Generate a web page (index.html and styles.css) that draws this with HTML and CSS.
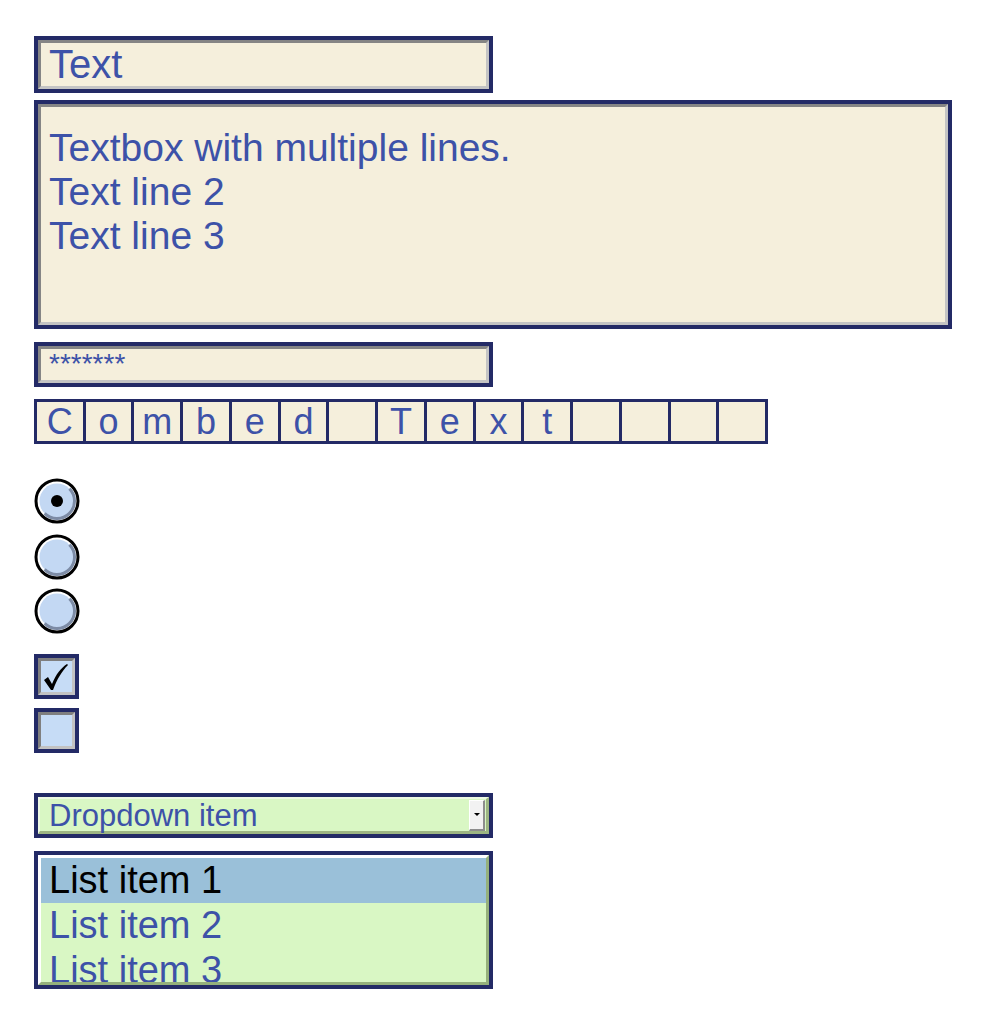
FILE: index.html
```html
<!DOCTYPE html>
<html>
<head>
<meta charset="utf-8">
<link rel="stylesheet" href="styles.css">
</head>
<body>
<div class="page">
  <div class="field single"><div class="inner">Text</div></div>
  <div class="field multi"><div class="inner">Textbox with multiple lines.<br>Text line 2<br>Text line 3</div></div>
  <div class="field pass"><div class="inner">*******</div></div>
  <div class="comb">
    <span>C</span><span>o</span><span>m</span><span>b</span><span>e</span><span>d</span><span></span><span>T</span><span>e</span><span>x</span><span>t</span><span></span><span></span><span></span><span></span>
  </div>
  <div class="radios">
    <svg class="radio" width="46" height="46" viewBox="0 0 46 46"><circle cx="23" cy="23" r="21" fill="#fff" stroke="#000" stroke-width="3"/><circle cx="23" cy="23" r="17.5" fill="#c3d8f3"/><path d="M35.4 10.6 A17.5 17.5 0 0 1 10.6 35.4" fill="none" stroke="#7d8ca6" stroke-width="3"/><circle cx="23" cy="23" r="6" fill="#000"/></svg>
    <svg class="radio" width="46" height="46" viewBox="0 0 46 46"><circle cx="23" cy="23" r="21" fill="#fff" stroke="#000" stroke-width="3"/><circle cx="23" cy="23" r="17.5" fill="#c3d8f3"/><path d="M35.4 10.6 A17.5 17.5 0 0 1 10.6 35.4" fill="none" stroke="#7d8ca6" stroke-width="3"/></svg>
    <svg class="radio" width="46" height="46" viewBox="0 0 46 46"><circle cx="23" cy="23" r="21" fill="#fff" stroke="#000" stroke-width="3"/><circle cx="23" cy="23" r="17.5" fill="#c3d8f3"/><path d="M35.4 10.6 A17.5 17.5 0 0 1 10.6 35.4" fill="none" stroke="#7d8ca6" stroke-width="3"/></svg>
  </div>
  <div class="checks">
    <div class="check"><div class="cinner"><svg class="tick" width="31" height="31" viewBox="0 0 31 31"><path d="M3 19 L7 16 L11 23 C15 13 20 7 26 3 L27 4 C21 10 16 18 12 29 L10 29 Z" fill="#000"/></svg></div></div>
    <div class="check"><div class="cinner"></div></div>
  </div>
  <div class="dropdown">
    <div class="dinner">
      <span class="dtext">Dropdown item</span>
      <span class="dbtn"><span class="tri"></span></span>
    </div>
  </div>
  <div class="list">
    <div class="linner">
      <div class="item sel">List item 1</div>
      <div class="item">List item 2</div>
      <div class="item">List item 3</div>
    </div>
  </div>
</div>
</body>
</html>
```

FILE: styles.css
```css
html, body { margin: 0; padding: 0; background: #fff; }
body { font-family: "Liberation Sans", Arial, sans-serif; color: #3d52a8; }
.page { padding: 36px 0 0 34px; display: flex; flex-direction: column; align-items: flex-start; }

.field { border: 4px solid #232a66; box-sizing: border-box; width: 459px; background: #f5efdc; }
.field .inner {
  border-style: solid; border-width: 3px;
  border-color: #858585 #c4c4c4 #c4c4c4 #858585;
  box-sizing: border-box; height: 100%;
  padding-left: 8px; white-space: nowrap; overflow: hidden;
}
.single { height: 57px; }
.single .inner { font-size: 40px; line-height: 42px; padding-top: 0; }
.multi { width: 918px; height: 229px; margin-top: 7px; }
.multi .inner { font-size: 39px; line-height: 44px; padding-top: 19px; }
.pass { height: 45px; margin-top: 13px; }
.pass .inner { font-size: 28px; line-height: 24px; padding-top: 3px; }

.comb {
  margin-top: 12px; display: flex; background: #232a66; padding: 3px;
  gap: 3px; width: 734px; height: 45px; box-sizing: border-box;
}
.comb span {
  flex: 1; background: #f5efdc; font-size: 36px; line-height: 39px;
  text-align: center; display: block;
}

.radios { margin-top: 34px; display: flex; flex-direction: column; }
.radio { display: block; }
.radio + .radio { margin-top: 10px; }
.radios .radio:nth-child(3) { margin-top: 8px; }

.checks { margin-top: 20px; display: flex; flex-direction: column; gap: 9px; }
.check { width: 45px; height: 45px; border: 4px solid #232a66; box-sizing: border-box; }
.cinner {
  height: 100%; box-sizing: border-box; background: #c6dcf6;
  border-style: solid; border-width: 3px;
  border-color: #7f7f7f #c2c2c2 #c2c2c2 #7f7f7f;
}
.tick { display: block; width: 31px; height: 31px; }

.dropdown { margin-top: 40px; width: 459px; height: 45px; border: 4px solid #232a66; box-sizing: border-box; background: #d9f7c4; }
.dinner {
  height: 100%; box-sizing: border-box; display: flex; align-items: center; justify-content: space-between;
  border-style: solid; border-width: 2px 3px 3px 2px;
  border-color: #eefae4 #9db583 #9db583 #eefae4;
  padding-left: 9px; padding-right: 1px;
}
.dtext { font-size: 31px; line-height: 34px; padding-top: 2px; }
.dbtn {
  width: 16px; height: 31px; background: #f2f2f2; box-sizing: border-box;
  border-style: solid; border-width: 1px 2px 2px 1px;
  border-color: #ffffff #8d8d8d #8d8d8d #ffffff;
  display: flex; align-items: center; justify-content: center;
}
.tri { width: 0; height: 0; border-left: 3px solid transparent; border-right: 3px solid transparent; border-top: 3px solid #000; }

.list { margin-top: 13px; width: 459px; height: 138px; border: 4px solid #232a66; box-sizing: border-box; background: #d9f7c4; }
.linner {
  height: 100%; box-sizing: border-box; overflow: hidden;
  border-style: solid; border-width: 3px;
  border-color: #ffffff #95b07c #95b07c #ffffff;
}
.item { font-size: 38px; line-height: 45px; padding-left: 8px; height: 45px; white-space: nowrap; }
.item.sel { background: #9ac0d9; color: #000; }
```
